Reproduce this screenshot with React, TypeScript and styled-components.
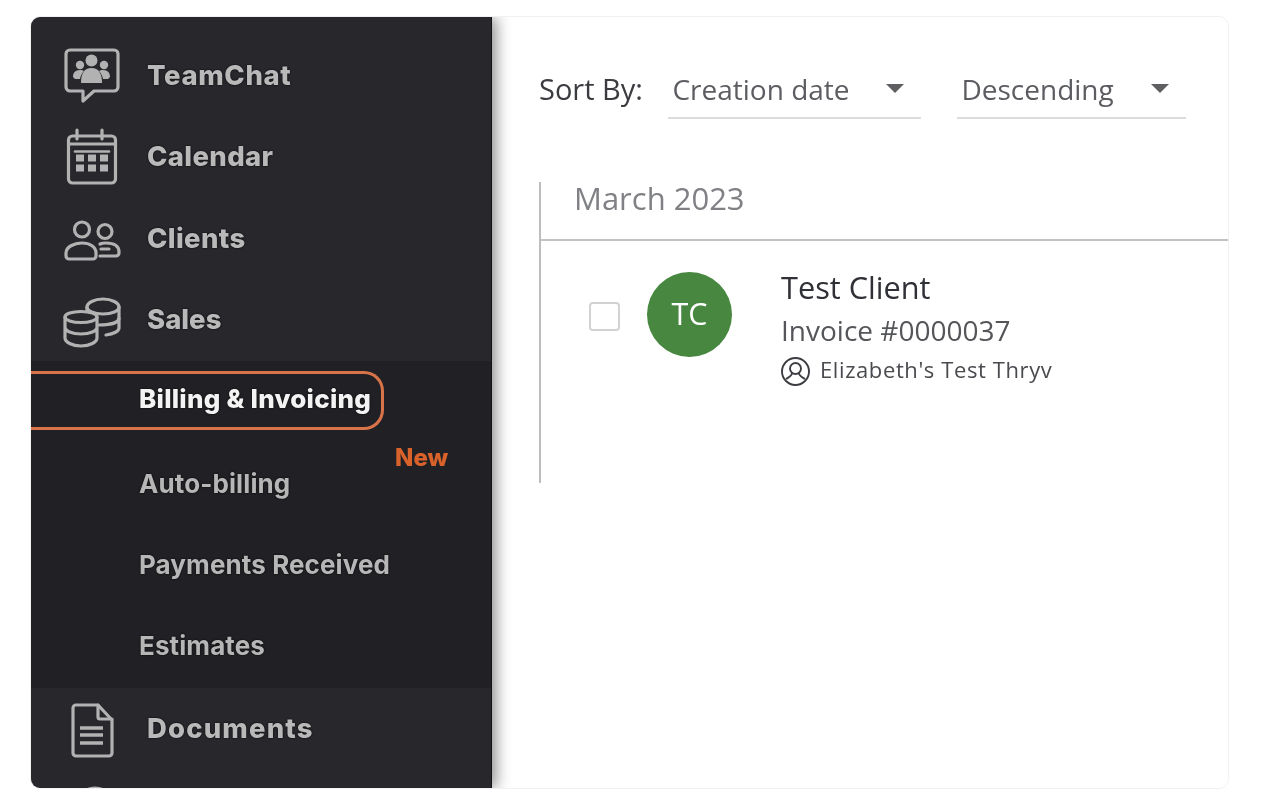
import React from 'react';
import styled, { createGlobalStyle } from 'styled-components';

const Global = createGlobalStyle`
  html, body { margin: 0; padding: 0; background: #fff; }
  body { width: 1268px; height: 804px; overflow: hidden; }
`;

const Page = styled.div`
  box-sizing: border-box;
  width: 1268px;
  height: 804px;
  padding: 16px 39px 15px 30px;
`;

const Frame = styled.div`
  box-sizing: border-box;
  height: 100%;
  display: flex;
  background: #fff;
  border: 1px solid #f1f1f2;
  border-radius: 10px;
  overflow: hidden;
  filter: blur(0.45px);
`;

const Sidebar = styled.nav`
  flex: 0 0 461px;
  height: 100%;
  padding-top: 18px;
  box-sizing: border-box;
  background: #27272c;
  overflow: hidden;
  box-shadow: 4px 0 14px rgba(0, 0, 0, 0.45);
  border-right: 1px solid #141416;
  position: relative;
  z-index: 1;
`;

const NavRow = styled.div`
  height: 81.5px;
  display: flex;
  align-items: center;
  flex-shrink: 0;
`;

const NavIcon = styled.svg`
  width: 60px;
  height: 60px;
  margin-left: 32px;
  margin-right: 24px;
  flex-shrink: 0;
  fill: none;
  stroke: #b2b2b3;
  stroke-width: 3.2;
  stroke-linejoin: round;
  stroke-linecap: round;
`;

const NavLabel = styled.span<{ $track?: number }>`
  font-family: Inter, "Liberation Sans", sans-serif;
  font-weight: 800;
  font-size: 27.5px;
  letter-spacing: ${p => p.$track ?? 0.35}px;
  color: #b9b9ba;
  margin-top: -2px;
  text-shadow: 0 0 2px #000;
`;

const SubMenu = styled.div`
  background: #212125;
  padding: 10px 0 2px;
`;

const ActivePill = styled.div`
  box-sizing: border-box;
  width: 353px;
  height: 59px;
  margin-bottom: 13px;
  display: flex;
  align-items: center;
  padding-left: 108px;
  border: 3.5px solid #d9744a;
  border-left: none;
  border-radius: 0 20px 20px 0;
`;

const ActiveLabel = styled.span`
  font-family: Inter, "Liberation Sans", sans-serif;
  font-weight: 800;
  font-size: 26px;
  letter-spacing: 0.25px;
  color: #f3f3f3;
  margin-top: -5px;
  text-shadow: 0 0 2px #000;
`;

const SubRow = styled.div`
  position: relative;
  height: 81px;
  display: flex;
  align-items: center;
  padding-left: 108px;
`;

const SubLabel = styled.span`
  font-family: Inter, "Liberation Sans", sans-serif;
  font-weight: 700;
  font-size: 26px;
  letter-spacing: 0.1px;
  color: #b6b6b7;
  text-shadow: 0 0 2px #000;
`;

const NewBadge = styled.span`
  position: absolute;
  left: 364px;
  top: 0;
  font-family: Inter, "Liberation Sans", sans-serif;
  font-weight: 800;
  font-size: 24px;
  color: #d9622b;
`;

const Main = styled.main`
  flex: 1;
  min-width: 0;
  padding: 50px 0 0 47px;
  display: flex;
  flex-direction: column;
`;

const SortBar = styled.div`
  display: flex;
  align-items: flex-start;
`;

const SortLabel = styled.span`
  font-family: "Open Sans", sans-serif;
  font-size: 29px;
  line-height: 44px;
  color: #3b3c40;
  margin-right: 25.500px;
`;

const Select = styled.div<{ $w: number; $gap: number }>`
  box-sizing: border-box;
  width: ${p => p.$w}px;
  height: 52px;
  margin-right: ${p => p.$gap}px;
  padding: 0 17px 0 4px;
  display: flex;
  align-items: flex-start;
  justify-content: space-between;
  border-bottom: 2px solid #dcdcdd;
`;

const SelectText = styled.span`
  font-family: "Open Sans", sans-serif;
  font-size: 28px;
  line-height: 44px;
  color: #5c5d61;
`;

const Caret = styled.span`
  width: 0;
  height: 0;
  margin-top: 17px;
  border-left: 9px solid transparent;
  border-right: 9px solid transparent;
  border-top: 9px solid #5f5f62;
`;

const Panel = styled.section`
  margin-top: 63px;
  height: 301px;
  border-left: 2px solid #bdbdbe;
`;

const MonthHeader = styled.div`
  box-sizing: border-box;
  height: 59px;
  padding: 0 0 0 33px;
  display: flex;
  align-items: flex-start;
  border-bottom: 2px solid #c2c2c3;
  font-family: "Open Sans", sans-serif;
  font-size: 31px;
  line-height: 32px;
  color: #808185;
`;

const InvoiceRow = styled.div`
  display: flex;
  align-items: flex-start;
  padding: 31px 0 0 48px;
`;

const Check = styled.span`
  box-sizing: border-box;
  width: 31px;
  height: 29px;
  margin-top: 30px;
  margin-right: 27px;
  border: 2px solid #d2d2d3;
  border-radius: 4px;
  background: #fff;
`;

const Avatar = styled.div`
  width: 85px;
  height: 85px;
  border-radius: 50%;
  background: #48873f;
  margin-right: 49px;
  flex-shrink: 0;
  display: flex;
  align-items: center;
  justify-content: center;
  padding-bottom: 3px;
  box-sizing: border-box;
  font-family: "Open Sans", sans-serif;
  font-size: 30.5px;
  color: #fff;
`;

const Details = styled.div`
  display: flex;
  flex-direction: column;
  margin-top: -5px;
`;

const ClientName = styled.div`
  font-family: "Open Sans", sans-serif;
  font-size: 30.7px;
  line-height: 40px;
  color: #303136;
`;

const InvoiceNo = styled.div`
  font-family: "Open Sans", sans-serif;
  font-size: 28px;
  line-height: 40px;
  margin-top: 3px;
  color: #55565a;
`;

const Owner = styled.div`
  display: flex;
  align-items: center;
  margin-top: 1px;
  font-family: "Open Sans", sans-serif;
  font-size: 22px;
  line-height: 32px;
  letter-spacing: 0.6px;
  color: #4a4b4f;
`;

const OwnerIcon = styled.svg`
  width: 31px;
  height: 31px;
  margin-left: -1px;
  margin-right: 9px;
  margin-top: 5px;
  fill: none;
  stroke: #3d3e42;
  stroke-width: 1.9;
`;

const ChatIcon = () => (
  <NavIcon viewBox="0 0 60 60">
    <path d="M7 4h44a4 4 0 0 1 4 4v33a4 4 0 0 1-4 4H31l-11 10v-10H7a4 4 0 0 1-4-4V8a4 4 0 0 1 4-4z" />
    <circle cx="28.500" cy="14.500" r="6" fill="#b2b2b3" stroke="none" />
    <circle cx="17" cy="19" r="4.200" fill="#b2b2b3" stroke="none" />
    <circle cx="41" cy="19" r="4.200" fill="#b2b2b3" stroke="none" />
    <path d="M18 37c0-9 3-15 10.500-15S39 28 39 37z" fill="#b2b2b3" stroke="none" />
    <path d="M10 31c0-4 2-7 7-7 2 0 3 .5 4 1-2 2-3.500 5-4 8h-5zM47 31c0-4-2-7-7-7-2 0-3 .5-4 1 2 2 3.500 5 4 8h5z" fill="#b2b2b3" stroke="none" />
  </NavIcon>
);

const CalendarIcon = () => (
  <NavIcon viewBox="0 0 60 60">
    <rect x="5.500" y="9" width="47" height="47" rx="4" />
    <path d="M14 3v9M39 3v9M5.500 17h47" />
    <path d="M12 24.500h34" strokeWidth="2.600" />
    <path d="M13 31h8M25 31h8M37 31h8M13 41h8M25 41h8M37 41h8" strokeWidth="7" strokeLinecap="butt" />
  </NavIcon>
);

const ClientsIcon = () => (
  <NavIcon viewBox="0 0 60 60">
    <circle cx="19" cy="20.500" r="7.500" />
    <circle cx="42" cy="22.500" r="7" />
    <path d="M6 50h24a3 3 0 0 0 3-3v-3c0-6-6-10-14-10S3 38 3 44v3a3 3 0 0 0 3 3z" />
    <path d="M37 35c2-1 4-1 6-1 8 0 13 3 13 9v1a3 3 0 0 1-3 3H37M38 40h8" />
  </NavIcon>
);

const SalesIcon = () => (
  <NavIcon viewBox="0 0 60 60">
    <path d="M24 21v-4c0-4 7-8 16-8s16 4 16 8v21c0 3-5 6-13 7" />
    <path d="M24 17c0 4 7 7 16 7s16-3 16-7M36 35c10 0 20-2 20-7" />
    <ellipse cx="18" cy="27" rx="16" ry="5.500" />
    <path d="M2 27v21c0 4 7 8 16 8s16-4 16-8V27M2 37c0 4 7 7 16 7s16-3 16-7" />
  </NavIcon>
);

const DocumentIcon = () => (
  <NavIcon viewBox="0 0 60 60">
    <path d="M13 6h22l14 15v33a3 3 0 0 1-3 3H13a3 3 0 0 1-3-3V9a3 3 0 0 1 3-3z" />
    <path d="M35 6v12a2 2 0 0 0 2 2h12" />
    <path d="M17 29h23M17 36h23M17 44h23" strokeWidth="3.600" strokeLinecap="butt" />
  </NavIcon>
);

const ClippedIcon = () => (
  <NavIcon viewBox="0 0 60 60">
    <ellipse cx="32" cy="20" rx="15" ry="12" />
  </NavIcon>
);

export default function App() {
  return (
    <Page>
      <Global />
      <Frame>
        <Sidebar>
          <NavRow><ChatIcon /><NavLabel $track={0.6}>TeamChat</NavLabel></NavRow>
          <NavRow><CalendarIcon /><NavLabel>Calendar</NavLabel></NavRow>
          <NavRow><ClientsIcon /><NavLabel>Clients</NavLabel></NavRow>
          <NavRow><SalesIcon /><NavLabel $track={0}>Sales</NavLabel></NavRow>
          <SubMenu>
            <ActivePill><ActiveLabel>Billing &amp; Invoicing</ActiveLabel></ActivePill>
            <SubRow><SubLabel>Auto-billing</SubLabel><NewBadge>New</NewBadge></SubRow>
            <SubRow><SubLabel>Payments Received</SubLabel></SubRow>
            <SubRow><SubLabel>Estimates</SubLabel></SubRow>
          </SubMenu>
          <NavRow><DocumentIcon /><NavLabel $track={1.15}>Documents</NavLabel></NavRow>
          <NavRow><ClippedIcon /></NavRow>
        </Sidebar>
        <Main>
          <SortBar>
            <SortLabel>Sort By:</SortLabel>
            <Select $w={253} $gap={36}><SelectText>Creation date</SelectText><Caret /></Select>
            <Select $w={229} $gap={0}><SelectText>Descending</SelectText><Caret /></Select>
          </SortBar>
          <Panel>
            <MonthHeader>March 2023</MonthHeader>
            <InvoiceRow>
              <Check />
              <Avatar>TC</Avatar>
              <Details>
                <ClientName>Test Client</ClientName>
                <InvoiceNo>Invoice #0000037</InvoiceNo>
                <Owner>
                  <OwnerIcon viewBox="0 0 31 31">
                    <circle cx="15.500" cy="15.500" r="13.500" />
                    <circle cx="15.500" cy="12.500" r="5.500" />
                    <path d="M12 17c0 3-3 4-6 6M19 17c0 3 3 4 6 6" />
                  </OwnerIcon>
                  Elizabeth's Test Thryv
                </Owner>
              </Details>
            </InvoiceRow>
          </Panel>
        </Main>
      </Frame>
    </Page>
  );
}
